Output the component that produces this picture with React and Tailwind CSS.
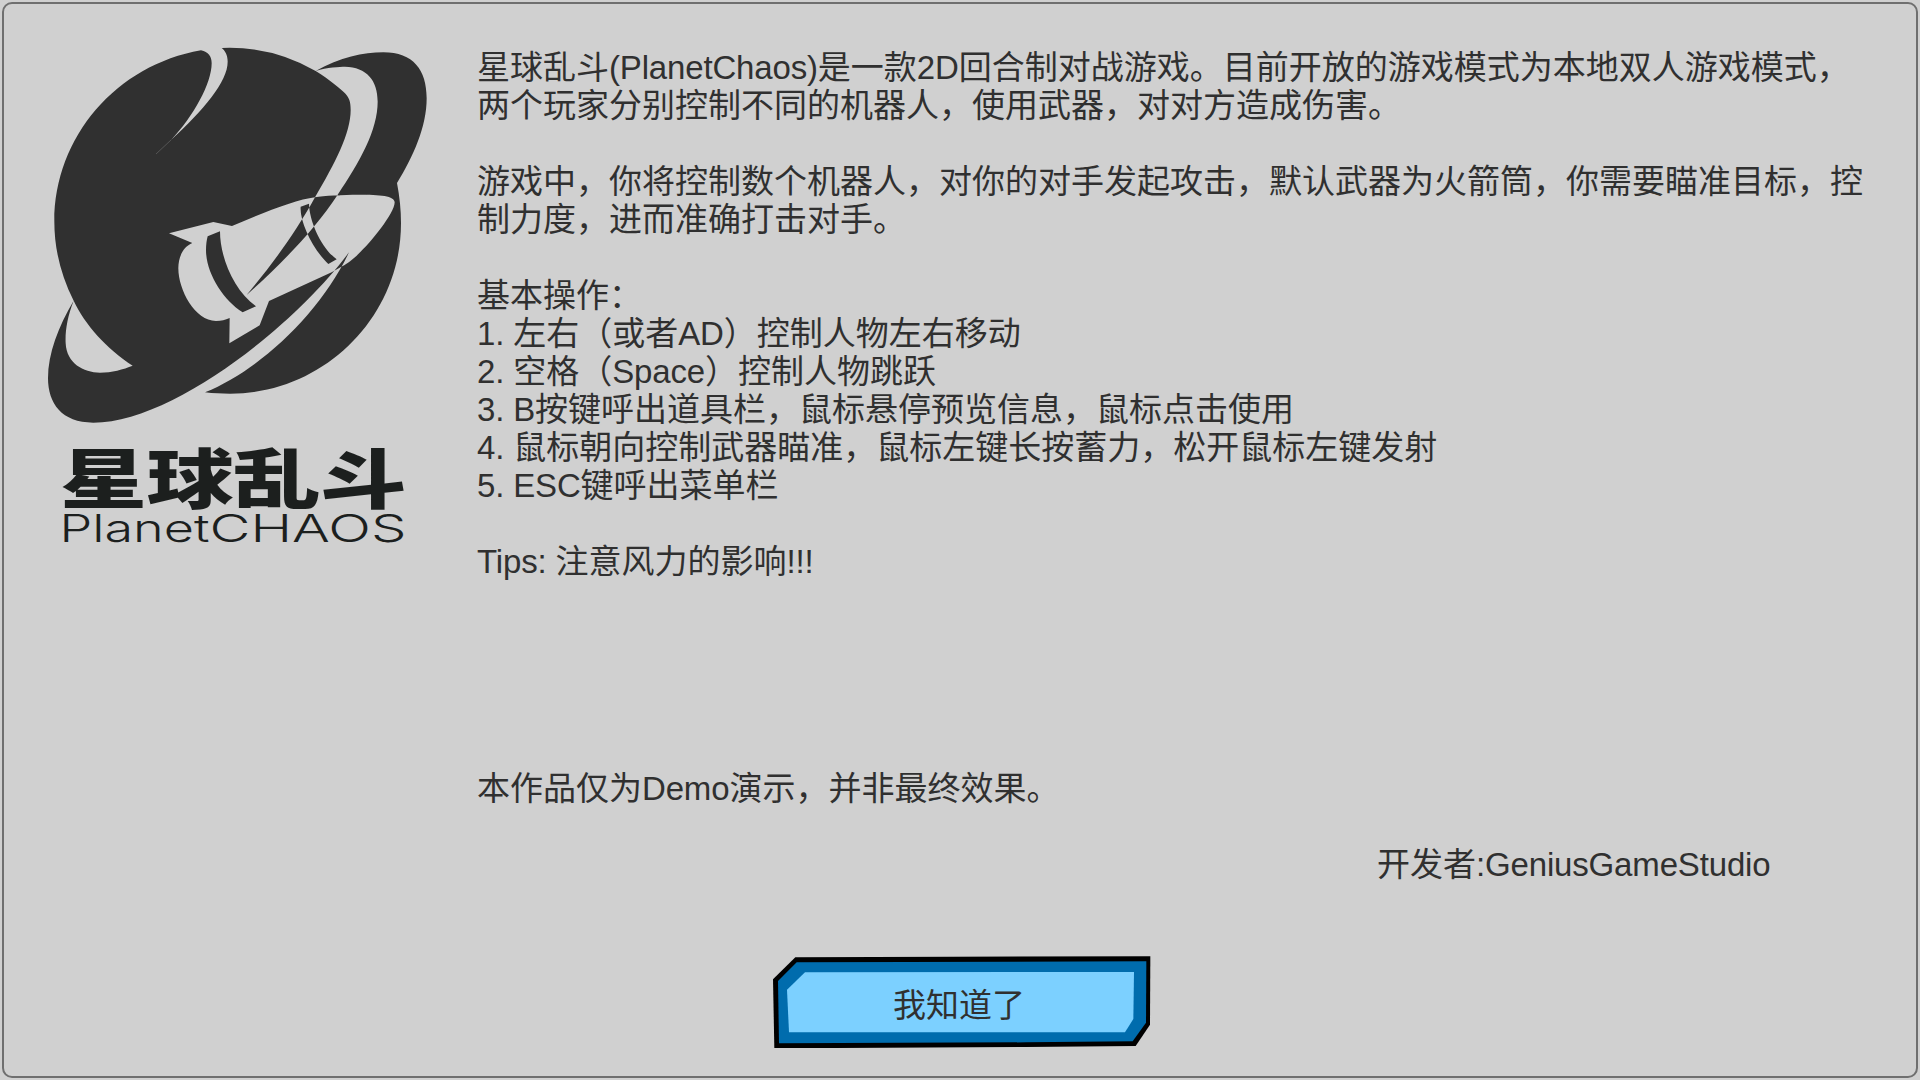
const LINES = [
  "星球乱斗(PlanetChaos)是一款2D回合制对战游戏。目前开放的游戏模式为本地双人游戏模式，",
  "两个玩家分别控制不同的机器人，使用武器，对对方造成伤害。",
  "",
  "游戏中，你将控制数个机器人，对你的对手发起攻击，默认武器为火箭筒，你需要瞄准目标，控",
  "制力度，进而准确打击对手。",
  "",
  "基本操作：",
  "1. 左右（或者AD）控制人物左右移动",
  "2. 空格（Space）控制人物跳跃",
  "3. B按键呼出道具栏，鼠标悬停预览信息，鼠标点击使用",
  "4. 鼠标朝向控制武器瞄准，鼠标左键长按蓄力，松开鼠标左键发射",
  "5. ESC键呼出菜单栏",
  "",
  "Tips: 注意风力的影响!!!",
  "",
  "",
  "",
  "",
  "",
  "本作品仅为Demo演示，并非最终效果。",
  "",
];

// Latin runs are set slightly tighter than the Chinese text around them.
function Line({ text }) {
  return text.split(/([\x20-\x7e]+)/).map((run, i) =>
    i % 2 === 1 ? (
      <span key={i} className="tracking-[-0.16px]">
        {run}
      </span>
    ) : (
      run
    ),
  );
}

function PlanetLogo() {
  return (
    <svg viewBox="0 0 1230 1200" className="block h-[400px] w-[410px]" aria-hidden="true">
      <path
        fill="#303030"
        fillRule="evenodd"
        d="M575 54 A519 519 0 0 1 857 123 C930 82 1000 67 1060 67 C1150 67 1190 120 1190 205 C1190 290 1150 380 1101 459 C1109 500 1113 540 1113 580 C1113 862 880 1091 600 1091 C575 1091 550 1090 525 1087 C690 1020 870 850 957 667 C800 880 430 1178 190 1178 C95 1178 54 1120 54 1045 C54 970 85 890 131 812 C92 735 73 655 73 575 C73 320 260 105 513 61 C535 65 545 80 545 100 C545 160 490 260 423 330 C520 240 593 155 593 95 C593 75 585 62 575 54 Z
        M857 123 C890 112 930 110 945 110 C1010 112 1043 150 1043 215 C1043 300 990 395 923 494 C850 605 745 710 650 795 C720 710 790 620 855 502 C915 400 962 310 962 240 C962 215 958 205 945 190 C930 175 900 150 857 123 Z
        M131 812 C112 860 105 905 107 940 C110 1000 160 1028 210 1028 C245 1028 280 1018 308 1007 C230 955 165 885 131 812 Z
        M417 610 L550 576 L606 588 C700 548 800 508 855 502 C880 497 940 494 985 494 C1050 494 1094 497 1094 517 C1094 550 1020 640 985 672 C970 687 950 703 938 708 L905 727 L717 813 L689 886 L598 940 L599 864 C585 870 575 873 558 873 C495 873 445 780 445 715 C445 680 460 650 487 639 Z
        M533 619 L570 604 C570 680 610 780 678 829 L638 847 C580 810 528 730 528 660 C528 645 530 630 533 619 Z
        M812 530 L837 521 C838 575 875 655 920 688 L895 702 C850 660 808 575 812 530 Z"
      />
      <path d="M423 330 L378 372" fill="none" stroke="#8a8a8a" strokeWidth="1.2" />
    </svg>
  );
}

function Wordmark() {
  return (
    <svg viewBox="0 0 380 130" className="block h-[130px] w-[380px] overflow-visible" fill="#1c1f1e">
      <text
        x="0"
        y="0"
        transform="translate(20 73) scale(1.34 1)"
        fontSize="65"
        textLength="259"
        className="font-['Noto_Sans_CJK_SC',sans-serif] font-black"
      >
        星球乱斗
      </text>
      <g fontSize="38" className="font-['Inter',sans-serif] font-light">
        <text x="19.5" y="111.5" textLength="150" lengthAdjust="spacingAndGlyphs">
          Planet
        </text>
        <text x="169.5" y="111.5" textLength="197" lengthAdjust="spacingAndGlyphs">
          CHAOS
        </text>
      </g>
    </svg>
  );
}

function ConfirmButton() {
  return (
    <button type="button" className="relative flex h-[92px] w-[378px] items-center justify-center pt-[8px] pr-[6px]">
      <svg viewBox="0 0 1134 276" className="absolute inset-0 h-full w-full" aria-hidden="true">
        <path fill="#000" d="M67 4 L540 2 L1132 1 L1131 206 L1088 270 L760 273 L4 277 L0 70 Z" />
        <path fill="#006cad" d="M71 19 L1120 16 L1119 200 L1079 256 L760 259 L18 262 L15 75 Z" />
        <path fill="#7cd0ff" d="M96 49 L1083 48 L1081 189 L1056 229 L48 229 L42 101 Z" />
      </svg>
      <span className="relative">我知道了</span>
    </button>
  );
}

export default function App() {
  return (
    <main
      lang="zh-CN"
      className="h-[1080px] w-[1920px] overflow-hidden bg-[#d0d0d0] p-0.5 font-['Liberation_Sans','Noto_Sans_CJK_SC',sans-serif] text-[33px] leading-[38px] text-[#303030]"
    >
      <section className="flex h-[1076px] w-[1916px] flex-col rounded-[10px] border-2 border-[#6f6f6f]">
        <div className="flex h-[950px]">
          <aside className="mt-[26px] ml-[26px] w-[410px] shrink-0">
            <PlanetLogo />
            <div className="ml-2.5">
              <Wordmark />
            </div>
          </aside>
          <article className="mt-[45px] ml-[37px]">
            {LINES.map((line, i) => (
              <p key={i} className="h-[37.97px] whitespace-pre">
                <Line text={line} />
              </p>
            ))}
            <p className="ml-[900px] whitespace-pre">
              <Line text="开发者:GeniusGameStudio" />
            </p>
          </article>
        </div>
        <div className="mt-[2px] ml-[769px] w-[378px]">
          <ConfirmButton />
        </div>
      </section>
    </main>
  );
}
